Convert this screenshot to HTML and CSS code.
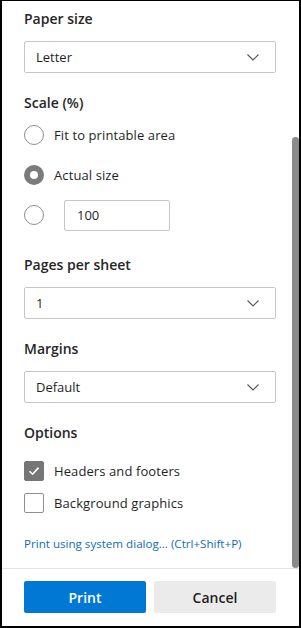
FILE: index.html
```html
<!DOCTYPE html>
<html lang="en">
<head>
<meta charset="utf-8">
<title>Print</title>
<link rel="stylesheet" href="styles.css">
</head>
<body>
<div class="frame">
  <div class="scroll">
    <div class="content">
      <div class="label first">Paper size</div>
      <div class="select"><span>Letter</span><svg class="chev" width="12" height="7" viewBox="0 0 12 7"><path d="M0.5 0.5 L6 6 L11.5 0.5" fill="none" stroke="#555" stroke-width="1.1"/></svg></div>

      <div class="label gap">Scale (%)</div>
      <div class="radios">
        <div class="radio-row"><span class="radio"></span><span class="opt">Fit to printable area</span></div>
        <div class="radio-row"><span class="radio on"></span><span class="opt">Actual size</span></div>
        <div class="radio-row"><span class="radio"></span><span class="num">100</span></div>
      </div>

      <div class="label gap">Pages per sheet</div>
      <div class="select"><span>1</span><svg class="chev" width="12" height="7" viewBox="0 0 12 7"><path d="M0.5 0.5 L6 6 L11.5 0.5" fill="none" stroke="#555" stroke-width="1.1"/></svg></div>

      <div class="label gap">Margins</div>
      <div class="select"><span>Default</span><svg class="chev" width="12" height="7" viewBox="0 0 12 7"><path d="M0.5 0.5 L6 6 L11.5 0.5" fill="none" stroke="#555" stroke-width="1.1"/></svg></div>

      <div class="label gap">Options</div>
      <div class="checks">
        <div class="check-row"><span class="box on"><svg width="14" height="14" viewBox="0 0 14 14"><path d="M2.5 7.2 L5.6 10.2 L11.5 3.6" fill="none" stroke="#fff" stroke-width="1.6"/></svg></span><span class="opt">Headers and footers</span></div>
        <div class="check-row"><span class="box"></span><span class="opt">Background graphics</span></div>
      </div>

      <a class="link" href="#">Print using system dialog... (Ctrl+Shift+P)</a>
    </div>
    <div class="track"><div class="thumb"></div></div>
  </div>
  <div class="footer">
    <button class="btn primary">Print</button>
    <button class="btn">Cancel</button>
  </div>
</div>
</body>
</html>
```
FILE: styles.css
```css
html, body {
  margin: 0;
  padding: 0;
  background: #fff;
}
body {
  font-family: "Open Sans", "Noto Sans", sans-serif;
  font-size: 13px;
  color: #1f1f1f;
}
.frame {
  width: 301px;
  height: 628px;
  box-sizing: border-box;
  border: 2px solid #000;
  border-top-width: 1px;
  display: flex;
  flex-direction: column;
}
.scroll {
  flex: 1;
  display: flex;
  min-height: 0;
}
.content {
  flex: 1;
  padding: 8px 0 0 22px;
  display: flex;
  flex-direction: column;
  align-items: flex-start;
}
.track {
  width: 7px;
  padding-top: 136px;
  display: flex;
  flex-direction: column;
}
.thumb {
  flex: 1;
  background: #8b8b8b;
  border-radius: 4px;
}
.label {
  font-size: 14px;
  font-weight: 600;
  line-height: 20px;
  color: #262626;
  height: 20px;
}
.label.first {
  margin-bottom: 12px;
}
.label.gap {
  margin-top: 20px;
}
.select {
  width: 252px;
  height: 32px;
  box-sizing: border-box;
  border: 1px solid #c6c6c6;
  border-radius: 2px;
  display: flex;
  align-items: center;
  justify-content: space-between;
  padding: 0 16px 0 11px;
  margin-top: 12px;
  line-height: 18px;
}
.label.first + .select {
  margin-top: 0;
}
.chev {
  display: block;
}
.radios {
  margin-top: 2px;
  display: flex;
  flex-direction: column;
}
.radio-row {
  height: 40px;
  display: flex;
  align-items: center;
}
.radio {
  width: 20px;
  height: 20px;
  box-sizing: border-box;
  border: 1px solid #8f8f8f;
  border-radius: 50%;
  margin-right: 10px;
  flex: none;
}
.radio.on {
  border: 6px solid #7b7b7b;
}
.opt {
  letter-spacing: 0.1px;
}
.num {
  margin-left: 10px;
  width: 106px;
  height: 31px;
  box-sizing: border-box;
  border: 1px solid #c6c6c6;
  border-radius: 2px;
  display: flex;
  align-items: center;
  padding-left: 12px;
}
.checks {
  margin-top: 12px;
  display: flex;
  flex-direction: column;
}
.check-row {
  height: 32px;
  display: flex;
  align-items: center;
}
.box {
  width: 20px;
  height: 20px;
  box-sizing: border-box;
  border: 1px solid #8f8f8f;
  border-radius: 2px;
  margin-right: 10px;
  flex: none;
  display: flex;
  align-items: center;
  justify-content: center;
}
.box.on {
  background: #767676;
  border-color: #767676;
}
.link {
  margin-top: 17px;
  font-size: 11.6px;
  line-height: 16px;
  color: #0f6cbd;
  text-decoration: none;
}
.footer {
  border-top: 1px solid #e4e4e4;
  padding: 12px 0 0 22px;
  height: 58px;
  box-sizing: border-box;
  display: flex;
  gap: 8px;
  align-items: flex-start;
}
.btn {
  width: 122px;
  height: 32px;
  border: none;
  border-radius: 2px;
  background: #ebebeb;
  color: #1f1f1f;
  font-family: "Open Sans", "Noto Sans", sans-serif;
  font-size: 14px;
  font-weight: 600;
  padding: 0;
}
.btn.primary {
  background: #0078d4;
  color: #fff;
}
```
